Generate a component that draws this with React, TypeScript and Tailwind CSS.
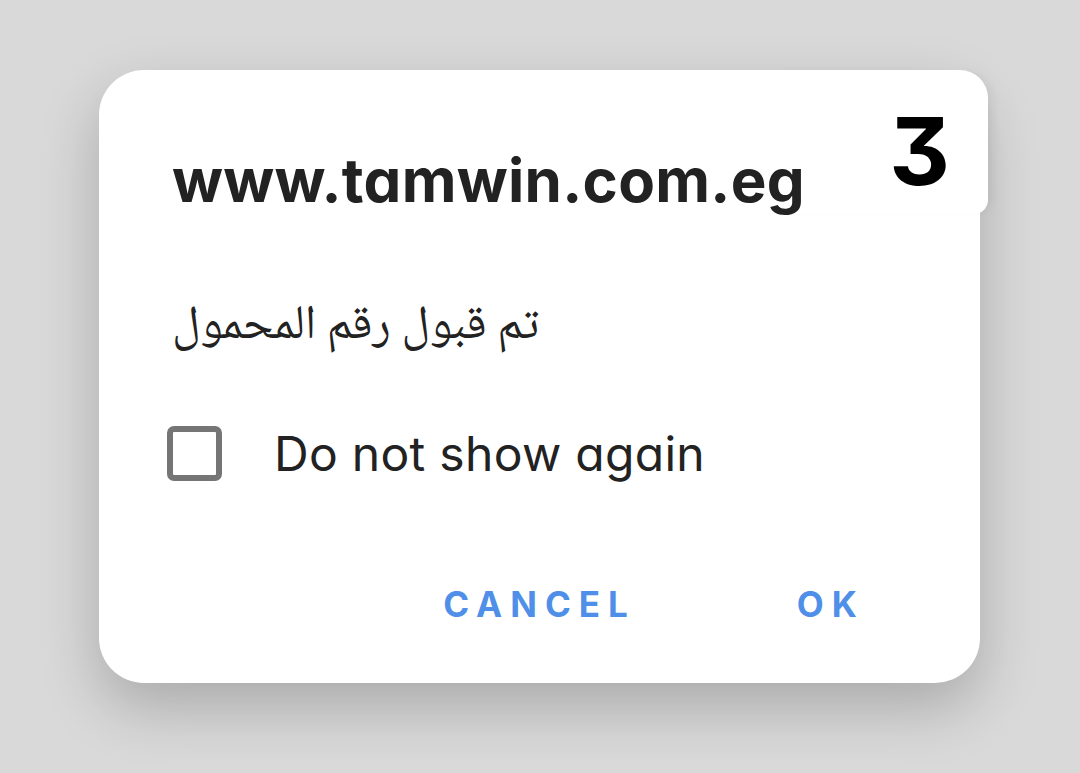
import React from "react";

export default function App() {
  return (
    <div className="w-[1080px] h-[773px] bg-[#d9d9d9] overflow-hidden relative font-['Inter',sans-serif] [font-feature-settings:'cv11','ss01']">
      <div className="absolute left-[99px] top-[70px] w-[881px] h-[613px] bg-white rounded-[45px] shadow-[0_24px_60px_rgba(0,0,0,0.22)] flex flex-col pl-[73px] pr-[115px]">
        <div className="absolute -right-[8px] top-0 w-[220px] h-[144px] bg-white rounded-tr-[28px] rounded-br-[14px] shadow-[8px_0_12px_-6px_rgba(0,0,0,0.08)]" />
        <div className="absolute right-[30px] top-[34px] text-[94px] leading-none font-bold text-black">3</div>
        <div className="mt-[80px] text-[60px] leading-none font-bold text-[#222] tracking-[0.3px] relative">www.tamwin.com.eg</div>
        <div className="mt-[94px] text-[48px] leading-none text-[#222] font-['Noto_Naskh_Arabic','Noto_Sans_Arabic','DejaVu_Sans',sans-serif]">تم قبول رقم المحمول</div>
        <div className="mt-[74px] flex items-center">
          <div className="w-[55px] h-[55px] border-[6px] border-[#757575] rounded-[7px] box-border -ml-[5px]" />
          <div className="ml-[52px] text-[48px] leading-none text-[#222] tracking-[0.3px]">Do not show again</div>
        </div>
        <div className="mt-[106px] flex justify-end items-center gap-[161px]">
          <div className="text-[35px] leading-none font-bold text-[#4f8fe8] tracking-[8px]">CANCEL</div>
          <div className="text-[35px] leading-none font-bold text-[#4f8fe8] tracking-[8px]">OK</div>
        </div>
      </div>
    </div>
  );
}
